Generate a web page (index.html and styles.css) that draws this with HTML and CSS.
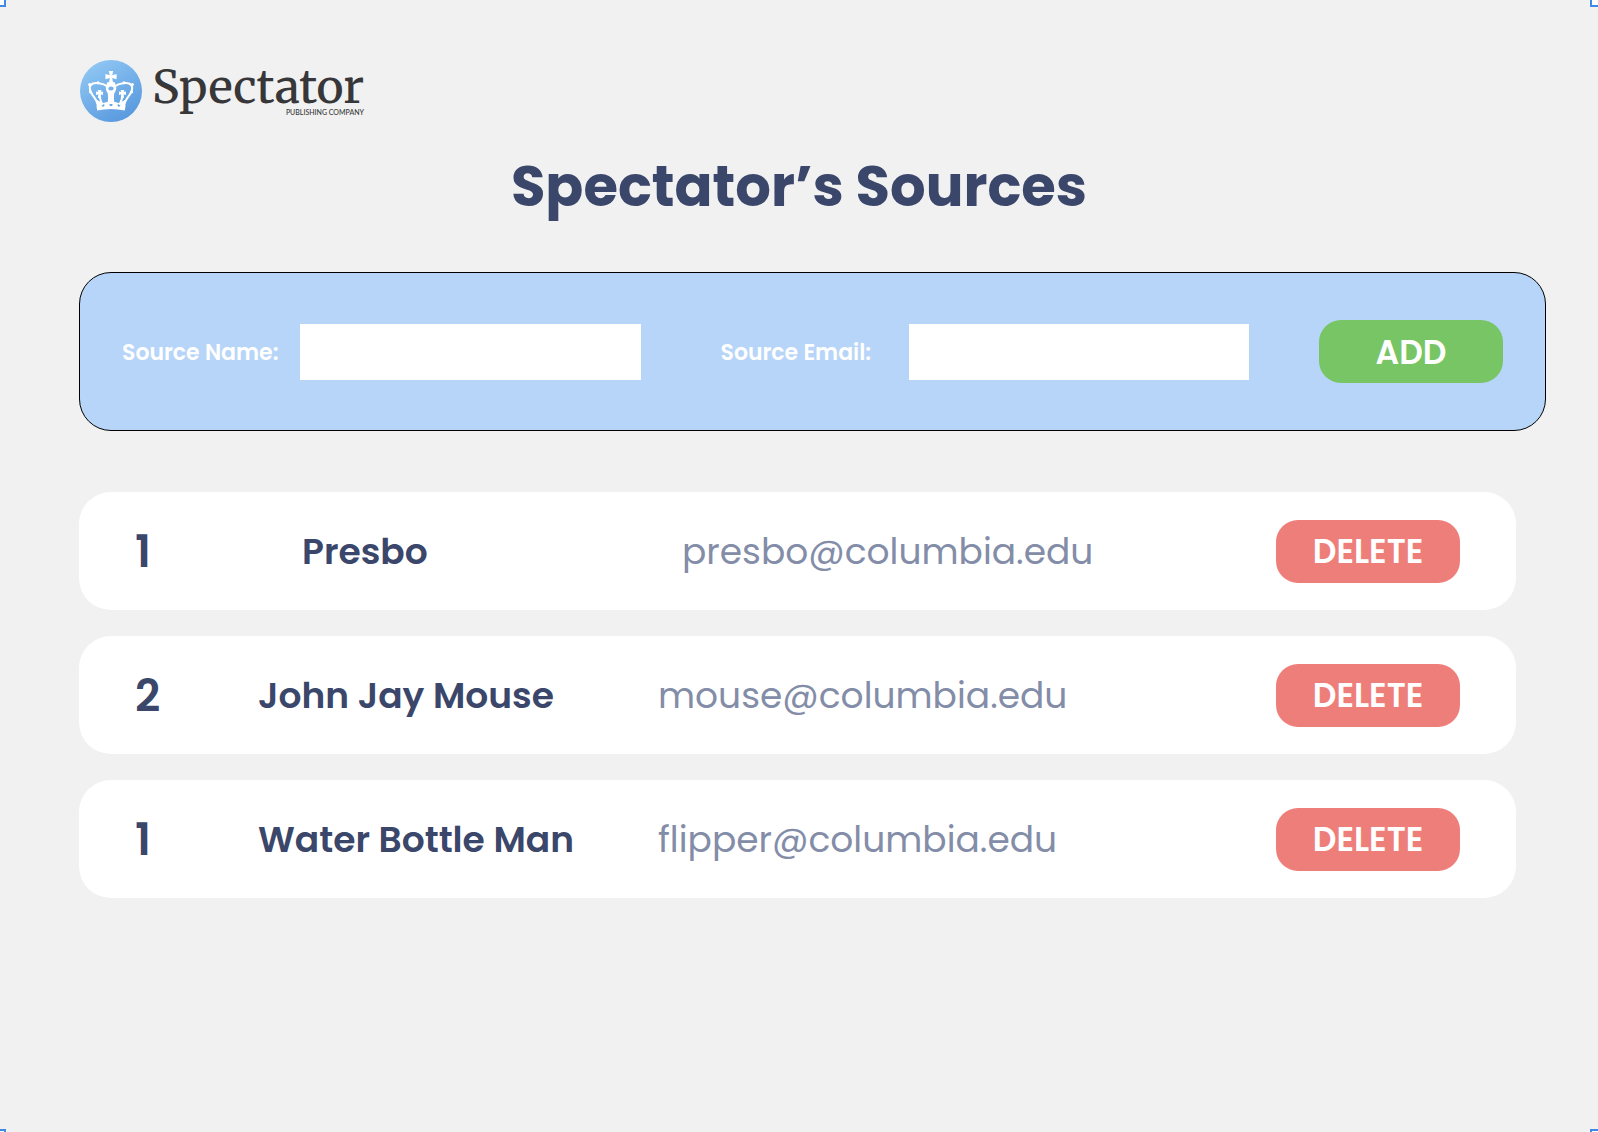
FILE: index.html
```html
<!DOCTYPE html>
<html lang="en">
<head>
<meta charset="utf-8">
<meta name="viewport" content="width=device-width, initial-scale=1">
<title>Spectator’s Sources</title>
<link rel="stylesheet" href="styles.css">
</head>
<body>
<div class="page">
  <header class="brand">
    <svg class="brand-mark" viewBox="0 0 62 62" aria-hidden="true">
      <defs>
        <linearGradient id="sky" x1="0.2" y1="0" x2="0.8" y2="1">
          <stop offset="0" stop-color="#91c8f4"/>
          <stop offset="1" stop-color="#5596dd"/>
        </linearGradient>
      </defs>
      <circle cx="31" cy="31" r="31" fill="url(#sky)"/>
      <g fill="none" stroke="#fff" stroke-width="2" stroke-linejoin="round">
        <path d="M17.500 44C16.500 38 9.500 34 9.800 27.500C10.200 23 15 22.600 19 23.300Q24 24 27.500 26.500"/>
        <path d="M44.500 44C45.500 38 52.500 34 52.200 27.500C51.800 23 47 22.600 43 23.300Q38 24 34.500 26.500"/>
        <path d="M19.500 31V37L22.500 45M42.500 31V37L39.500 45"/>
      </g>
      <g fill="#fff">
        <path d="M28.800 11H33.200L32.200 15.200L36.600 14V19.200L32.200 17.900L33 22.500H29L29.800 17.900L25.400 19.200V14L29.800 15.200Z"/>
        <path fill-rule="evenodd" d="M27 22.500Q31 21 35 22.500L36.300 28Q36 31 34.200 33.500Q33.400 38 34.500 44H27.500Q28.600 38 27.800 33.500Q26 31 25.700 28ZM28.300 28.500a2.700 2 0 1 0 5.400 0a2.700 2 0 1 0-5.400 0Z"/>
        <path d="M17.500 30H21.500L20.500 32L23 31.400V35L20.500 34.300L21.300 38H18L18.600 34.300L16 35V31.400L18.500 32ZM40.500 30H44.500L43.500 32L46 31.400V35L43.400 34.300L44 38H40.700L41.500 34.300L39 35V31.400L41.500 32Z"/>
        <path fill-rule="evenodd" d="M17 40L23 43L27 42L31 43L35 42L39 43L45 40L45.500 46L44.800 50.600Q31 47.500 17.200 50.600L16.500 46ZM21.700 45.300a1.400 1.400 0 1 0 2.800 0a1.400 1.400 0 1 0-2.800 0ZM29.400 44.600a1.600 1.600 0 1 0 3.200 0a1.600 1.600 0 1 0-3.200 0ZM37.500 45.300a1.400 1.400 0 1 0 2.800 0a1.400 1.400 0 1 0-2.800 0Z"/>
        <circle cx="9.600" cy="24.500" r="1.500"/><circle cx="52.400" cy="24.500" r="1.500"/>
        <circle cx="10.300" cy="32" r="1.400"/><circle cx="51.700" cy="32" r="1.400"/>
        <circle cx="18" cy="22.800" r="1.500"/><circle cx="44" cy="22.800" r="1.500"/>
      </g>
    </svg>
    <div class="brand-text">
      <span class="brand-name">Spectator</span>
      <span class="brand-sub">PUBLISHING COMPANY</span>
    </div>
  </header>

  <h1 class="title">Spectator’s Sources</h1>

  <form class="add-form">
    <label class="field-label" for="source-name">Source Name:</label>
    <input class="field-input" id="source-name" type="text">
    <label class="field-label field-label-email" for="source-email">Source Email:</label>
    <input class="field-input" id="source-email" type="email">
    <button class="button button-add" type="button">ADD</button>
  </form>

  <table class="sources" aria-label="Sources">
    <colgroup>
      <col class="col-number"><col class="col-name"><col><col class="col-action">
    </colgroup>
    <tbody>
      <tr class="indented">
        <td class="number">1</td>
        <td class="name">Presbo</td>
        <td class="email">presbo@columbia.edu</td>
        <td class="action"><button class="button button-delete" type="button">DELETE</button></td>
      </tr>
      <tr>
        <td class="number">2</td>
        <td class="name">John Jay Mouse</td>
        <td class="email">mouse@columbia.edu</td>
        <td class="action"><button class="button button-delete" type="button">DELETE</button></td>
      </tr>
      <tr>
        <td class="number">1</td>
        <td class="name">Water Bottle Man</td>
        <td class="email">flipper@columbia.edu</td>
        <td class="action"><button class="button button-delete" type="button">DELETE</button></td>
      </tr>
    </tbody>
  </table>

  <span class="handle handle-tl"></span>
  <span class="handle handle-tr"></span>
  <span class="handle handle-bl"></span>
  <span class="handle handle-br"></span>
</div>
</body>
</html>
```
FILE: styles.css
```css
* {
  box-sizing: border-box;
}

body {
  margin: 0;
  background: #f1f1f1;
  color: #3a466a;
  font-family: Poppins, Inter, "Open Sans", sans-serif;
}

.page {
  position: relative;
  min-height: 100vh;
  padding-top: 60px;
  overflow: hidden;
}

/* Logo */
.brand {
  display: flex;
  gap: 10px;
  padding-left: 80px;
}

.brand-mark {
  width: 62px;
  height: 62px;
}

.brand-text {
  display: flex;
  flex-direction: column;
  align-items: flex-end;
  padding-top: 7px;
  color: #37373a;
}

.brand-name {
  font-family: Merriweather, "DejaVu Serif Condensed", "DejaVu Serif", serif;
  font-size: 46px;
  line-height: 41px;
  font-weight: 500;
}

.brand-sub {
  font-family: Lato, sans-serif;
  font-size: 7px;
  line-height: 8px;
  font-weight: 500;
}

.title {
  margin: 25px 0 45px;
  text-align: center;
  font-size: 56px;
  line-height: 80px;
  font-weight: 700;
}

/* Form for a new source */
.add-form {
  display: grid;
  grid-template-columns: 178px 1fr 268px 1fr 254px;
  align-items: center;
  height: 159px;
  margin: 0 52px 0 79px;
  padding: 0 42px;
  border: 1px solid #000;
  border-radius: 32px;
  background: #b7d5f8;
}

.field-label {
  padding-top: 2px;
  color: #fff;
  font-size: 22px;
  line-height: 32px;
  font-weight: 600;
}

.field-label-email {
  padding-left: 80px;
}

.field-input {
  width: 100%;
  height: 56px;
  padding: 0 12px;
  border: 0;
  background: #fff;
  color: inherit;
  font: inherit;
  font-size: 22px;
}

.button {
  width: 184px;
  height: 63px;
  padding: 2px 0 0;
  border: 0;
  border-radius: 22px;
  color: #fff;
  font: inherit;
  font-size: 33px;
  font-weight: 600;
}

.button-add {
  justify-self: end;
  background: #77c564;
}

.button-delete {
  display: block;
  margin-left: auto;
  background: #ee7e7a;
}

/* Each source is a white card */
.sources {
  width: calc(100% - 161px);
  margin: 35px 82px 0 79px;
  table-layout: fixed;
  border-collapse: separate;
  border-spacing: 0 26px;
}

.col-number {
  width: 179px;
}

.col-name {
  width: 400px;
}

.col-action {
  width: 240px;
}

.sources td {
  height: 118px;
  padding: 0;
  background: #fff;
  white-space: nowrap;
}

.sources .number {
  padding-left: 56px;
  border-radius: 32px 0 0 32px;
  font-size: 44px;
  font-weight: 600;
}

.sources .name {
  font-size: 36px;
  font-weight: 600;
}

.sources .email {
  color: #838da8;
  font-size: 36px;
}

.sources .action {
  padding-right: 56px;
  border-radius: 0 32px 32px 0;
}

.sources .indented .name {
  padding-left: 44px;
}

.sources .indented .email {
  padding-left: 24px;
}

/* Selection handles on the frame's corners */
.handle {
  position: absolute;
  width: 12px;
  height: 12px;
  border: 2px solid #3e8ae6;
  background: #fff;
}

.handle-tl {
  top: -5px;
  left: -6px;
}

.handle-tr {
  top: -5px;
  right: -4px;
}

.handle-bl {
  bottom: -9px;
  left: -6px;
}

.handle-br {
  right: -4px;
  bottom: -9px;
}
```
